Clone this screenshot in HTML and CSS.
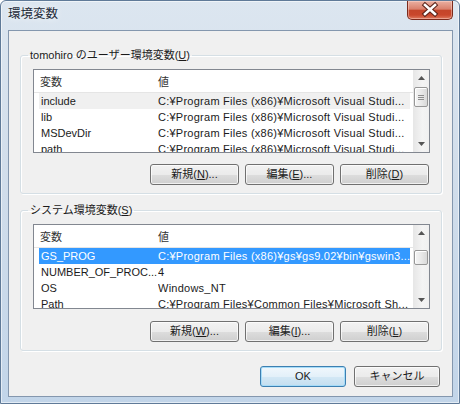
FILE: index.html
```html
<!DOCTYPE html>
<html lang="ja">
<head>
<meta charset="utf-8">
<title>環境変数</title>
<link rel="stylesheet" href="styles.css">
</head>
<body>
<div class="window">
  <div class="titlebar">
    <span class="title">環境変数</span>
    <div class="close">
      <svg width="46" height="19" viewBox="0 0 46 19">
        <path d="M18 5 L28 14 M28 5 L18 14" stroke="#5b2218" stroke-width="4.6" stroke-linecap="square" fill="none"/>
        <path d="M18 5 L28 14 M28 5 L18 14" stroke="#ffffff" stroke-width="2.6" stroke-linecap="square" fill="none"/>
      </svg>
    </div>
  </div>
  <div class="client">
    <fieldset class="group">
      <legend>tomohiro のユーザー環境変数(<u>U</u>)</legend>
      <div class="listbox">
        <div class="list-main">
          <div class="list-header"><span class="h1">変数</span><span class="h2">値</span></div>
          <div class="rows">
            <div class="row inactive-sel"><span class="c1">include</span><span class="c2">C:¥Program Files (x86)¥Microsoft Visual Studi...</span></div>
            <div class="row"><span class="c1">lib</span><span class="c2">C:¥Program Files (x86)¥Microsoft Visual Studi...</span></div>
            <div class="row"><span class="c1">MSDevDir</span><span class="c2">C:¥Program Files (x86)¥Microsoft Visual Studi...</span></div>
            <div class="row"><span class="c1">path</span><span class="c2">C:¥Program Files (x86)¥Microsoft Visual Studi...</span></div>
          </div>
        </div>
        <div class="scrollbar">
          <div class="arrow"><svg width="7" height="4" viewBox="0 0 7 4"><path d="M0 4 L3.5 0 L7 4 Z" fill="#555"/></svg></div>
          <div class="track">
            <div class="thumb" style="margin-top:1px;height:20px"><span class="grip"></span></div>
          </div>
          <div class="arrow"><svg width="7" height="4" viewBox="0 0 7 4"><path d="M0 0 L7 0 L3.5 4 Z" fill="#555"/></svg></div>
        </div>
      </div>
      <div class="buttons">
        <button class="btn">新規(<u>N</u>)...</button>
        <button class="btn">編集(<u>E</u>)...</button>
        <button class="btn">削除(<u>D</u>)</button>
      </div>
    </fieldset>

    <fieldset class="group group-system">
      <legend>システム環境変数(<u>S</u>)</legend>
      <div class="listbox listbox-system">
        <div class="list-main">
          <div class="list-header"><span class="h1">変数</span><span class="h2">値</span></div>
          <div class="rows">
            <div class="row selected"><span class="c1">GS_PROG</span><span class="c2">C:¥Program Files (x86)¥gs¥gs9.02¥bin¥gswin3...</span></div>
            <div class="row"><span class="c1">NUMBER_OF_PROC...</span><span class="c2">4</span></div>
            <div class="row"><span class="c1">OS</span><span class="c2">Windows_NT</span></div>
            <div class="row"><span class="c1">Path</span><span class="c2">C:¥Program Files¥Common Files¥Microsoft Sh...</span></div>
          </div>
        </div>
        <div class="scrollbar">
          <div class="arrow"><svg width="7" height="4" viewBox="0 0 7 4"><path d="M0 4 L3.5 0 L7 4 Z" fill="#555"/></svg></div>
          <div class="track">
            <div class="thumb" style="margin-top:9px;height:15px"></div>
          </div>
          <div class="arrow"><svg width="7" height="4" viewBox="0 0 7 4"><path d="M0 0 L7 0 L3.5 4 Z" fill="#555"/></svg></div>
        </div>
      </div>
      <div class="buttons">
        <button class="btn">新規(<u>W</u>)...</button>
        <button class="btn">編集(<u>I</u>)...</button>
        <button class="btn">削除(<u>L</u>)</button>
      </div>
    </fieldset>

    <div class="dialog-buttons">
      <button class="btn btn-default">OK</button>
      <button class="btn">キャンセル</button>
    </div>
  </div>
</div>
</body>
</html>
```

FILE: styles.css
```css
* {
  box-sizing: border-box;
}

html,
body {
  margin: 0;
  padding: 0;
}

body {
  width: 460px;
  height: 404px;
  overflow: hidden;
  font-family: "Liberation Sans", "Noto Sans CJK JP", sans-serif;
  font-size: 11px;
  color: #1b1b1b;
  background: #ffffff;
}

.window {
  width: 460px;
  height: 404px;
  display: flex;
  flex-direction: column;
  border: 1px solid #5f7a98;
  border-radius: 6px 6px 0 0;
  background: linear-gradient(to bottom, #dce6f0 0%, #d2deeb 40%, #c2d5e9 100%);
  box-shadow: inset 0 0 0 1px rgba(255, 255, 255, 0.55);
}

.titlebar {
  height: 29px;
  flex: none;
  display: flex;
  justify-content: space-between;
  align-items: flex-start;
  padding: 0 6px 0 7px;
}

.title {
  margin-top: 6px;
  font-size: 12.5px;
  line-height: 15px;
  color: #1e2a38;
  text-shadow: 0 0 6px rgba(255, 255, 255, 0.9);
}

.close {
  width: 46px;
  height: 19px;
  border: 1px solid #7b2a1c;
  border-top: none;
  border-radius: 0 0 5px 5px;
  background: linear-gradient(to bottom, #eab0a2 0%, #d9806c 45%, #c4452a 52%, #c9472c 78%, #de7a5f 100%);
  box-shadow: inset 0 0 0 1px rgba(255, 220, 210, 0.45);
}

.close svg {
  display: block;
  margin: -1px 0 0 -1px;
}

.client {
  height: 367px;
  flex: none;
  margin: 0 6px 0 7px;
  padding: 17px 10px 0 11px;
  border: 1px solid #8497ae;
  background: #f0f0f0;
  display: flex;
  flex-direction: column;
}

.group {
  margin: 0;
  min-width: 0;
  padding: 7px 11px 8px 12px;
  border: 1px solid #d5dfe5;
  border-radius: 3px;
  box-shadow: inset 1px 1px 0 #ffffff, 1px 1px 0 #ffffff;
}

.group-system {
  margin-top: 9px;
}

legend {
  padding: 0 2px;
  margin-left: -5px;
  line-height: 14px;
  font-size: 11px;
  color: #1b1b1b;
}

.listbox {
  height: 84px;
  display: flex;
  border: 1px solid #828790;
  background: #ffffff;
  overflow: hidden;
}

.listbox-system {
  height: 85px;
}

.list-main {
  flex: 1;
  min-width: 0;
  overflow: hidden;
}

.list-header {
  height: 23px;
  display: flex;
  align-items: center;
  padding-left: 6px;
  border-bottom: 1px solid #e5e5e5;
  color: #333333;
  white-space: nowrap;
}

.h1 {
  width: 118px;
  flex: none;
}

.rows {
  padding: 0 3px 0 5px;
}

.row {
  height: 16px;
  line-height: 16px;
  display: flex;
  padding-left: 2px;
  white-space: nowrap;
}

.c1 {
  width: 117px;
  flex: none;
  overflow: hidden;
}

.c2 {
  flex: 1;
  min-width: 0;
  overflow: hidden;
  letter-spacing: 0.25px;
}

.inactive-sel {
  background: #f0f0f0;
}

.selected {
  background: #3399ff;
  color: #ffffff;
}

.scrollbar {
  width: 16px;
  flex: none;
  display: flex;
  flex-direction: column;
  background: linear-gradient(to right, #e6e6e6, #f4f4f4 60%, #f0f0f0);
}

.arrow {
  height: 16px;
  flex: none;
  display: flex;
  align-items: center;
  justify-content: center;
}

.arrow svg {
  display: block;
}

.track {
  flex: 1;
  padding: 0 1px;
}

.thumb {
  display: flex;
  align-items: center;
  justify-content: center;
  border: 1px solid #979797;
  border-radius: 2px;
  background: linear-gradient(to right, #f5f5f5 0%, #e9e9e9 50%, #d9d9d9 100%);
  box-shadow: inset 1px 1px 0 #ffffff;
}

.grip {
  width: 6px;
  height: 5px;
  border-top: 1px solid #8d8d8d;
  border-bottom: 1px solid #8d8d8d;
  background: linear-gradient(to bottom, transparent 1px, #8d8d8d 1px, #8d8d8d 2px, transparent 2px);
}

.buttons {
  display: flex;
  justify-content: flex-end;
  gap: 6px;
  margin-top: 11px;
  padding-right: 1px;
}

.group-system .buttons {
  margin-top: 12px;
}

.btn {
  width: 89px;
  height: 21px;
  padding: 0;
  border: 1px solid #707070;
  border-radius: 3px;
  background: linear-gradient(to bottom, #f2f2f2 0%, #ebebeb 50%, #dddddd 51%, #cfcfcf 100%);
  box-shadow: inset 0 0 0 1px rgba(255, 255, 255, 0.7);
  font-family: "Liberation Sans", "Noto Sans CJK JP", sans-serif;
  font-size: 11px;
  color: #1b1b1b;
  line-height: 17px;
}

.dialog-buttons {
  display: flex;
  justify-content: flex-end;
  gap: 8px;
  margin-top: 15px;
  padding-right: 2px;
}

.dialog-buttons .btn {
  width: 86px;
}

.btn-default {
  border-color: #3c7fb1;
  background: linear-gradient(to bottom, #f0f7fc 0%, #e3f0f9 50%, #d3e8f5 51%, #c4def0 100%);
  box-shadow: inset 0 0 0 1px #a6dcf8;
}
```
